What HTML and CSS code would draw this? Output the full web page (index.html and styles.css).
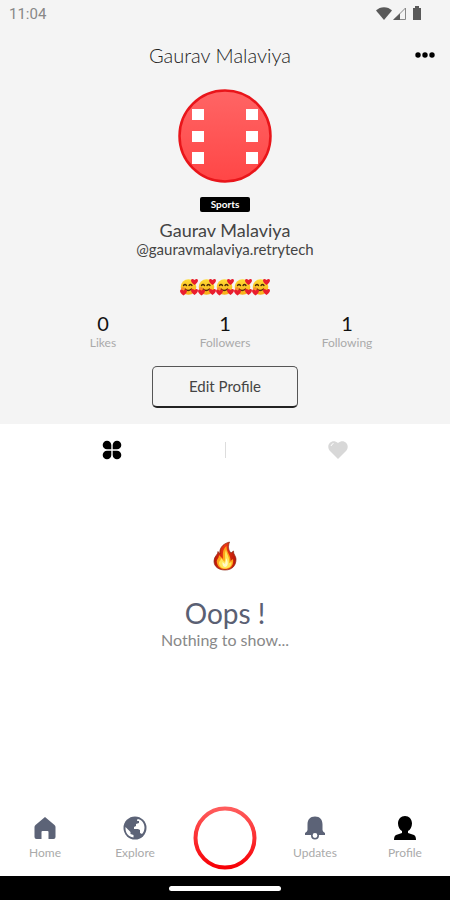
FILE: index.html
```html
<!DOCTYPE html>
<html lang="en">
<head>
<meta charset="utf-8">
<meta name="viewport" content="width=device-width, initial-scale=1">
<title>Profile</title>
<link rel="stylesheet" href="styles.css">
</head>
<body>
<svg class="defs" aria-hidden="true">
  <defs>
    <linearGradient id="avatar-fill" x1="0" y1="0" x2="0" y2="1"><stop offset="0" stop-color="#ff6565"/><stop offset="1" stop-color="#ff4646"/></linearGradient>
    <linearGradient id="ring" x1="0" y1="0" x2="0" y2="1"><stop offset="0" stop-color="#ff5c5c"/><stop offset="1" stop-color="#f70006"/></linearGradient>
    <linearGradient id="face" x1="0" y1="0" x2="0" y2="1"><stop offset="0" stop-color="#ffdc35"/><stop offset="1" stop-color="#f8ad18"/></linearGradient>
    <linearGradient id="flame" x1="0" y1="0" x2="1" y2="0"><stop offset="0" stop-color="#b81408"/><stop offset=".5" stop-color="#ee3a14"/><stop offset="1" stop-color="#b81408"/></linearGradient>
    <path id="small-heart" d="M0 3C-6-1-3-5 0-2 3-5 6-1 0 3Z"/>
    <symbol id="love-face" viewBox="0 0 18 18">
      <circle cx="8.500" cy="9" r="7.800" fill="url(#face)"/>
      <path d="M3.500 7.500q1.500-2 3 0M9 7.500q1.500-2 3 0" fill="none" stroke="#4c2b08" stroke-width="1.300" stroke-linecap="round"/>
      <path d="M5 11q3 3 6.500 0" fill="none" stroke="#5c2b08" stroke-width="1.300" stroke-linecap="round"/>
      <ellipse cx="3" cy="10.500" rx="1.800" ry="1.200" fill="#f98b35"/>
      <g fill="#e91d2e"><use href="#small-heart" x="14.500" y="4"/><use href="#small-heart" x="14.500" y="14"/><use href="#small-heart" x="3.500" y="14.500"/></g>
    </symbol>
  </defs>
</svg>
<div class="screen">
  <header class="profile">
    <div class="status">
      <time>11:04</time>
      <svg width="48" height="16" viewBox="0 0 48 16" aria-hidden="true">
        <path d="M2 4.500C6 0 14 0 18 4.500L10 14Z" fill="#595959"/>
        <path d="M20 13.500 31.500 2V13.500Z" fill="none" stroke="#888" stroke-width="1"/><path d="M19 14 26 7.500V14Z" fill="#595959"/>
        <path d="M39 2h2V0h4v2h2v12h-8Z" fill="#595959"/>
      </svg>
    </div>
    <div class="topbar">
      <h1>Gaurav Malaviya</h1>
      <button class="more" aria-label="More options"><svg width="22" height="8" viewBox="0 0 22 8"><circle cx="4" cy="4" r="2.700"/><circle cx="11" cy="4" r="2.700"/><circle cx="18" cy="4" r="2.700"/></svg></button>
    </div>
    <svg class="avatar" viewBox="0 0 94 94" role="img" aria-label="Profile picture">
      <circle cx="47" cy="47" r="45.500" fill="url(#avatar-fill)" stroke="#e9151a" stroke-width="2.500"/>
      <path fill="#fff" d="M14 20h12v11H14zM14 42h12v11H14zM14 63h12v12H14zM68 20h12v11H68zM68 42h12v11H68zM68 63h12v12H68z"/>
    </svg>
    <span class="tag">Sports</span>
    <h2>Gaurav Malaviya</h2>
    <p class="handle">@gauravmalaviya.retrytech</p>
    <div class="bio" role="img" aria-label="Five smiling faces with hearts">
      <svg><use href="#love-face"/></svg><svg><use href="#love-face"/></svg><svg><use href="#love-face"/></svg><svg><use href="#love-face"/></svg><svg><use href="#love-face"/></svg>
    </div>
    <dl class="stats">
      <div><dt>Likes</dt><dd>0</dd></div>
      <div><dt>Followers</dt><dd>1</dd></div>
      <div><dt>Following</dt><dd>1</dd></div>
    </dl>
    <button class="edit">Edit Profile</button>
  </header>
  <div class="tabs">
    <button aria-label="Posts"><svg width="20" height="20" viewBox="0 0 20 20"><path d="M9.300 9.300H5A4.300 4.300 0 1 1 9.300 5ZM10.700 9.300V5A4.300 4.300 0 1 1 15 9.300ZM9.300 10.700V15A4.300 4.300 0 1 1 5 10.700ZM10.700 10.700H15A4.300 4.300 0 1 1 10.700 15Z"/></svg></button>
    <span class="divider"></span>
    <button aria-label="Liked"><svg width="20" height="20" viewBox="0 0 20 20"><path fill="#d8d8d8" d="M10 19 2 11C-3 5 4-2 10 3 16-2 23 5 18 11Z"/><path d="M3 6q.5-2 2.500-2.500" fill="none" stroke="#fff" stroke-width="1"/></svg></button>
  </div>
  <main class="empty">
    <svg width="24" height="30" viewBox="0 0 24 30" aria-hidden="true">
      <path fill="url(#flame)" stroke="#8b2510" stroke-width=".7" d="M16.500 1C9 3 6 8 7 13L5 10.500C5 14 1 15 1 20 1 26 6 29 12 29 19 29 23 25 23 18 23 15 20 13 20.500 10L18 12C15 9 15 5 16.500 1Z"/>
      <path fill="#ffa51a" d="M13.500 5C9 9 10 13 10 18L6 14C6 18 3 18 4 22 5 26 8 28 12 28 18 28 21 24 20 18L17.500 20C18 14 13 11 13.500 5Z"/>
      <path fill="#ffe75a" d="M13 9C11 13 13 17 11.500 21L8 17C8 20 5.500 20 6 23 7 26 9 27.500 12 27.500 16 27.500 19 25 18.500 21L16 22C17 17 14 14 13 9Z"/>
      <path fill="#fffac8" d="M13.500 17 12 23 9.500 21Q9 26 12.500 26 16.500 25 13.500 17Z"/>
    </svg>
    <h2>Oops !</h2>
    <p>Nothing to show...</p>
  </main>
  <nav class="nav" aria-label="Main">
    <a href="#home"><svg viewBox="0 0 24 24"><path d="M12 1 21.500 9q1 1 1 2v10q0 2-2 2h-5v-7q0-1-1-1h-5q-1 0-1 1v7h-5q-2 0-2-2V11q0-1 1-2Z"/></svg>Home</a>
    <a href="#explore"><svg viewBox="0 0 24 24"><circle cx="12" cy="12" r="11.500"/><path fill="#fff" d="M14.500 3C18 3 21.500 7 21.500 11.500 21.500 14 20.500 16.500 19 18l-2-1v-3l-2-1h-4v-2l2-1V8l3-1V5h-2ZM2.500 11l5 5v2l3 1v2.500C5 21 2 16 2.500 11Z"/></svg>Explore</a>
    <button class="create" aria-label="Create"><svg viewBox="0 0 64 64"><circle cx="32" cy="32" r="29.500" fill="#fff" stroke="url(#ring)" stroke-width="4"/></svg></button>
    <a href="#updates"><svg viewBox="0 0 24 24"><path d="M12 .500c5 0 7.500 3 7.500 8V14q0 1.500 2.500 3v2H2v-2q2.500-1.500 2.500-3V8.500c0-5 2.500-8 7.500-8Z"/><circle cx="12" cy="19.500" r="3.200" fill="#fff" stroke="#5c6377" stroke-width="1.600"/></svg>Updates</a>
    <a href="#profile" class="active" aria-current="page"><svg viewBox="0 0 24 24"><path d="M12 0C16 0 19 3 19 7.500 19 11 17 14 15 15v2l6 2q2 1 2 5H1q0-4 2-5l6-2v-2C7 14 5 11 5 7.500 5 3 8 0 12 0Z"/></svg>Profile</a>
  </nav>
  <div class="system"><span></span></div>
</div>
</body>
</html>
```

FILE: styles.css
```css
* { box-sizing: border-box; }
body {
  margin: 0;
  font-family: Lato, "Liberation Sans", sans-serif;
  color: #444;
  background: #fff;
}
h1, h2, p, dl, dd { margin: 0; font-weight: 400; }
button { padding: 0; border: 0; background: none; font: inherit; color: inherit; cursor: pointer; }
svg { display: block; }
.defs { position: absolute; width: 0; height: 0; }
.screen { min-height: 100vh; display: flex; flex-direction: column; }

.profile {
  display: flex;
  flex-direction: column;
  align-items: center;
  padding-bottom: 16px;
  background: #f4f4f4;
}
.status {
  width: 100%;
  height: 28px;
  padding: 0 28px 0 9px;
  display: flex;
  align-items: center;
  justify-content: space-between;
  font: 15px/28px Roboto, sans-serif;
  color: #888;
}
.topbar {
  width: 100%;
  height: 54px;
  padding: 0 14px 0 4px;
  display: grid;
  grid-template-columns: 1fr auto 1fr;
  align-items: center;
}
.topbar h1 { grid-column: 2; font-size: 20px; line-height: 24px; font-weight: 300; color: #222; }
.more { justify-self: end; padding: 8px 0; color: #000; }
.avatar { width: 94px; height: 94px; margin-top: 7px; }
.tag {
  min-width: 50px;
  margin-top: 14px;
  border-radius: 2px;
  background: #000;
  color: #fff;
  font-size: 10px;
  font-weight: 700;
  line-height: 15px;
  text-align: center;
}
.profile h2 { margin-top: 7px; font-size: 18px; line-height: 22px; }
.handle { font-size: 15px; line-height: 16px; }
.bio { display: flex; margin-top: 21px; }
.bio svg { width: 18px; height: 18px; }
.stats {
  width: 100%;
  margin-top: 15px;
  padding: 0 42px;
  display: grid;
  grid-template-columns: repeat(3, 1fr);
  text-align: center;
}
.stats div { display: flex; flex-direction: column-reverse; }
.stats dt { font-size: 12px; line-height: 16px; color: #aaa; }
.stats dd { font-size: 20px; line-height: 24px; color: #111; }
.edit {
  margin-top: 15px;
  padding: 0 36px;
  border: 1px solid #555;
  border-bottom: 2px solid #222;
  border-radius: 5px;
  font-size: 15px;
  line-height: 39px;
}

.tabs {
  height: 52px;
  display: grid;
  grid-template-columns: 1fr 1px 1fr;
  align-items: center;
  justify-items: center;
}
.divider { width: 1px; height: 16px; background: #ddd; }

.empty {
  flex: 1;
  display: flex;
  flex-direction: column;
  align-items: center;
  padding-top: 65px;
}
.empty h2 { margin-top: 25px; font-size: 28px; line-height: 34px; color: #5a6073; }
.empty p { font-size: 16px; line-height: 20px; color: #888; }

.nav {
  height: 76px;
  display: grid;
  grid-template-columns: repeat(5, 1fr);
  align-items: center;
  justify-items: center;
}
.nav a {
  display: flex;
  flex-direction: column;
  align-items: center;
  gap: 5px;
  color: #aaa;
  font-size: 12px;
  line-height: 16px;
  text-decoration: none;
}
.nav a svg { width: 24px; height: 24px; fill: #5c6377; }
.nav .active svg { fill: #000; }
.create svg { width: 64px; height: 64px; }
.system {
  height: 24px;
  display: flex;
  align-items: center;
  justify-content: center;
  background: #000;
}
.system span { width: 25%; height: 5px; border-radius: 3px; background: #fff; }
```
